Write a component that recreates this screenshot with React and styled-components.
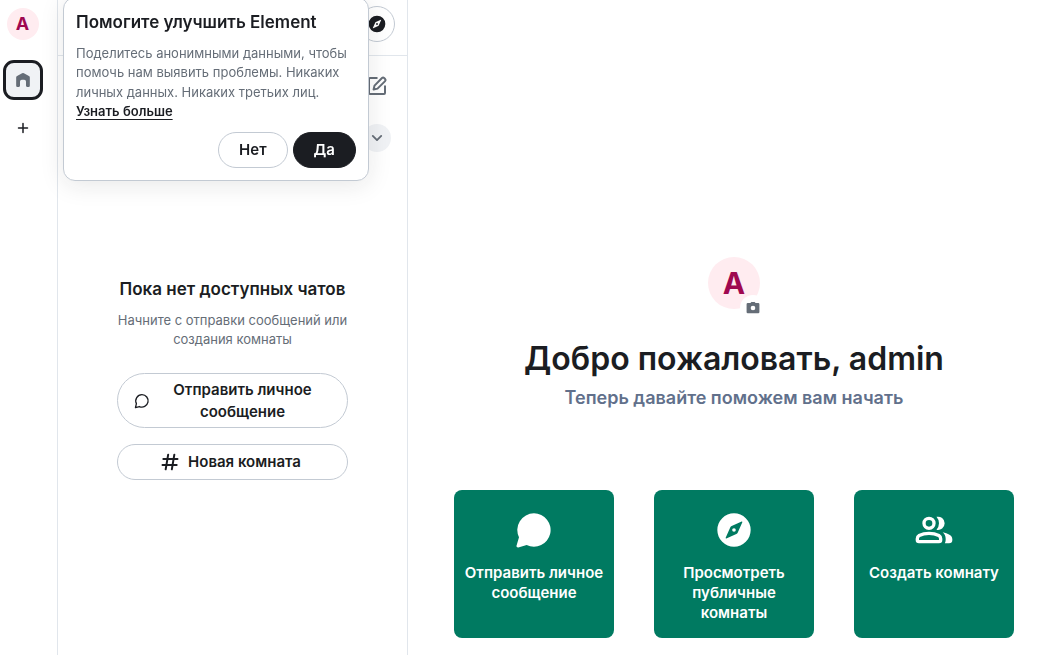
import React from 'react'
import styled, { createGlobalStyle } from 'styled-components'

const GlobalStyle = createGlobalStyle`
  * {
    box-sizing: border-box;
  }
  body {
    margin: 0;
    background: #fff;
    color: #1b1d22;
    font-family: Inter, "Liberation Sans", sans-serif;
    font-size: 15px;
    line-height: 1.5;
    -webkit-font-smoothing: antialiased;
  }
  h1, h2, h3, p {
    margin: 0;
  }
  button {
    font: inherit;
    color: inherit;
    cursor: pointer;
  }
`

/* icons */

const Icon = ({ size = 24, children, ...rest }) => (
  <svg width={size} height={size} viewBox="0 0 24 24" fill="currentColor" aria-hidden="true" {...rest}>
    {children}
  </svg>
)

const HomeIcon = (props) => (
  <Icon {...props}>
    <path d="M10.9 3.900a2 2 0 0 1 2.200 0l6 3.300A2 2 0 0 1 20.200 9V18.800a1.500 1.500 0 0 1-1.500 1.500H16.900a1.300 1.300 0 0 1-1.300-1.300V13.800a2.200 2.200 0 0 0-2.200-2.200h-2.800a2.200 2.200 0 0 0-2.200 2.200v5.200a1.300 1.300 0 0 1-1.300 1.300H5.300A1.500 1.500 0 0 1 3.800 18.800V9a2 2 0 0 1 1.100-1.800z" />
  </Icon>
)

const PlusIcon = (props) => (
  <Icon {...props}>
    <path d="M12 6v12M6 12h12" fill="none" stroke="currentColor" strokeWidth="2" strokeLinecap="round" />
  </Icon>
)

const ExploreIcon = (props) => (
  <Icon {...props}>
    <path
      fillRule="evenodd"
      d="M12 2a10 10 0 1 1 0 20 10 10 0 0 1 0-20zM16.600 6.900l-6 2.700a1.500 1.500 0 0 0-.8.8l-2.800 6.300c-.1.300.1.500.4.400l6-2.700a1.500 1.500 0 0 0 .8-.8l2.800-6.300c.1-.3-.1-.5-.4-.4z"
    />
    <circle cx="12" cy="12" r="1.100" />
  </Icon>
)

const ComposeIcon = (props) => (
  <Icon {...props}>
    <path
      d="M12.500 4H5a1 1 0 0 0-1 1v14a1 1 0 0 0 1 1h14a1 1 0 0 0 1-1v-7.500"
      fill="none"
      stroke="currentColor"
      strokeWidth="2"
    />
    <path
      d="M9.500 11.600 17 4a1.500 1.500 0 0 1 2.100 0l1 1a1.500 1.500 0 0 1 0 2.100L12.500 14.600 8.600 15.500z"
      fill="none"
      stroke="currentColor"
      strokeWidth="2"
      strokeLinejoin="round"
    />
  </Icon>
)

const ChevronDownIcon = (props) => (
  <Icon {...props}>
    <path
      d="m7.400 9.700 4.600 4.600 4.600-4.600"
      fill="none"
      stroke="currentColor"
      strokeWidth="2"
      strokeLinecap="round"
      strokeLinejoin="round"
    />
  </Icon>
)

const ChatIcon = (props) => (
  <Icon {...props}>
    <path
      d="M12 2.500a9.300 9.300 0 1 1-3.900 17.800L2.200 21.800l1.400-5.900A9.300 9.300 0 0 1 12 2.500z"
      fill="none"
      stroke="currentColor"
      strokeWidth="2"
      strokeLinejoin="round"
    />
  </Icon>
)

const ChatSolidIcon = (props) => (
  <Icon {...props}>
    <path d="M12 2a10 10 0 1 1-4.400 19l-5 1.500a.9.9 0 0 1-1.100-1.100l1.500-5A10 10 0 0 1 12 2z" />
  </Icon>
)

const RoomIcon = (props) => (
  <Icon {...props}>
    <path
      d="M9.800 3.200 6.800 20.800M17.200 3.200l-3 17.600M4 8.500h17M3 15.500h17"
      fill="none"
      stroke="currentColor"
      strokeWidth="2.4"
      strokeLinecap="round"
    />
  </Icon>
)

const GroupIcon = (props) => (
  <Icon {...props}>
    <circle cx="9" cy="8" r="3" fill="none" stroke="currentColor" strokeWidth="2" />
    <path
      d="M2 17.200c0-.8.400-1.500 1.100-1.900C4.900 14.400 6.900 14 9 14s4.100.4 5.900 1.300c.7.4 1.100 1.100 1.100 1.900V18a1 1 0 0 1-1 1H3a1 1 0 0 1-1-1z"
      fill="none"
      stroke="currentColor"
      strokeWidth="2"
    />
    <path d="M13.500 4.100a4 4 0 1 1 0 7.800A6 6 0 0 0 15 8a6 6 0 0 0-1.500-3.900z" />
    <path d="M17.200 13.400c3.100.6 5.800 1.900 5.800 4.100V18a2 2 0 0 1-2 2h-2.500c.3-.6.5-1.300.5-2v-.8c0-1.600-.7-2.900-1.800-3.800z" />
  </Icon>
)

const CameraIcon = (props) => (
  <Icon {...props}>
    <path
      fillRule="evenodd"
      d="M7.600 3.500 8.800 2A1.200 1.200 0 0 1 9.800 1.500h4.400a1.200 1.200 0 0 1 1 .5l1.200 1.500H21a2 2 0 0 1 2 2V19a2 2 0 0 1-2 2H3a2 2 0 0 1-2-2V5.500a2 2 0 0 1 2-2zM12 8a4 4 0 1 0 0 8 4 4 0 0 0 0-8z"
    />
  </Icon>
)

/* page */

export default function App() {
  return (
    <>
      <GlobalStyle />
      <Layout>
        <SpacePanel aria-label="Пространства">
          <Avatar $size={32}>A</Avatar>
          <HomeButton aria-label="Главная">
            <HomeIcon size={20} />
          </HomeButton>
          <AddButton aria-label="Создать пространство">
            <PlusIcon size={18} />
          </AddButton>
        </SpacePanel>

        <ChatPanel>
          <SearchBar>
            <OutlineRound aria-label="Обзор комнат">
              <ExploreIcon size={20} />
            </OutlineRound>
          </SearchBar>
          <Tools>
            <ToolButton aria-label="Новое сообщение">
              <ComposeIcon />
            </ToolButton>
            <ToolButton $filled aria-label="Развернуть фильтры">
              <ChevronDownIcon size={22} />
            </ToolButton>
          </Tools>
          <EmptyState>
            <Title>Пока нет доступных чатов</Title>
            <Description>Начните с отправки сообщений или создания комнаты</Description>
            <Actions>
              <PillButton $wide>
                <ChatIcon size={16} />
                <span>Отправить личное сообщение</span>
              </PillButton>
              <PillButton $wide>
                <RoomIcon size={20} />
                <span>Новая комната</span>
              </PillButton>
            </Actions>
          </EmptyState>
        </ChatPanel>

        <Welcome>
          <AvatarUpload aria-label="Загрузить аватар">
            <Avatar $size={52}>A</Avatar>
            <CameraBadge>
              <CameraIcon size={14} />
            </CameraBadge>
          </AvatarUpload>
          <Heading>Добро пожаловать, admin</Heading>
          <Subheading>Теперь давайте поможем вам начать</Subheading>
          <Cards>
            <Card>
              <ChatSolidIcon size={40} />
              Отправить личное сообщение
            </Card>
            <Card>
              <ExploreIcon size={40} />
              Просмотреть публичные комнаты
            </Card>
            <Card>
              <GroupIcon size={40} />
              Создать комнату
            </Card>
          </Cards>
        </Welcome>
      </Layout>

      <Toast role="alert">
        <Title>Помогите улучшить Element</Title>
        <Description>
          Поделитесь анонимными данными, чтобы помочь нам выявить проблемы. Никаких личных данных. Никаких третьих
          лиц. <MoreLink href="#more">Узнать больше</MoreLink>
        </Description>
        <ToastButtons>
          <PillButton>Нет</PillButton>
          <PillButton $primary>Да</PillButton>
        </ToastButtons>
      </Toast>
    </>
  )
}

const Layout = styled.div`
  display: flex;
  min-height: 100vh;
`

const SpacePanel = styled.nav`
  display: flex;
  flex-direction: column;
  align-items: center;
  flex: none;
  width: 58px;
  padding: 8px 12px 0 0;
  border-right: 1px solid #e1e6ec;
`

const Avatar = styled.span`
  display: flex;
  align-items: center;
  justify-content: center;
  width: ${(p) => p.$size}px;
  height: ${(p) => p.$size}px;
  border-radius: 50%;
  background: #ffecf0;
  color: #9f0850;
  font-size: ${(p) => (p.$size > 40 ? 30 : 18)}px;
  font-weight: 700;
  line-height: 1;
`

const HomeButton = styled.button`
  display: flex;
  align-items: center;
  justify-content: center;
  width: 40px;
  height: 40px;
  margin-top: 20px;
  padding: 0;
  border: 3px solid #1b1d22;
  border-radius: 11px;
  background: #f0f2f5;
  color: #656d77;
`

const AddButton = styled.button`
  display: flex;
  align-items: center;
  justify-content: center;
  width: 32px;
  height: 32px;
  margin-top: 12px;
  padding: 0;
  border: 0;
  background: none;
`

const ChatPanel = styled.section`
  flex: none;
  width: 350px;
  border-right: 1px solid #e1e6ec;
`

const SearchBar = styled.div`
  display: flex;
  justify-content: flex-end;
  height: 56px;
  padding: 6px 12px;
  border-bottom: 1px solid #e1e6ec;
`

const OutlineRound = styled.button`
  display: flex;
  align-items: center;
  justify-content: center;
  width: 36px;
  height: 36px;
  padding: 0;
  border: 1px solid #c3cad3;
  border-radius: 50%;
  background: #fff;
`

const Tools = styled.div`
  display: flex;
  flex-direction: column;
  align-items: flex-end;
  gap: 24px;
  padding: 16px;
`

const ToolButton = styled.button`
  display: flex;
  align-items: center;
  justify-content: center;
  width: 28px;
  height: 28px;
  padding: 0;
  border: 0;
  border-radius: 50%;
  background: ${(p) => (p.$filled ? '#f0f2f5' : 'none')};
  color: #656d77;
`

const EmptyState = styled.div`
  display: flex;
  flex-direction: column;
  gap: 8px;
  width: 231px;
  margin: 109px auto 0;
  text-align: center;
`

const Title = styled.h2`
  font-size: 17px;
  font-weight: 600;
`

const Description = styled.p`
  color: #656d77;
  font-size: 13px;
`

const Actions = styled.div`
  display: flex;
  flex-direction: column;
  gap: 16px;
  margin-top: 15px;
`

const PillButton = styled.button`
  display: flex;
  align-items: center;
  justify-content: center;
  gap: 8px;
  min-height: 36px;
  padding: ${(p) => (p.$wide ? '5px 20px 4px 16px' : '4px 20px')};
  border: 1px solid ${(p) => (p.$primary ? '#1b1d22' : '#c3cad3')};
  border-radius: 28px;
  background: ${(p) => (p.$primary ? '#1b1d22' : '#fff')};
  color: ${(p) => (p.$primary ? '#fff' : '#1b1d22')};
  font-weight: 600;
  line-height: 22px;
  svg {
    flex: none;
  }
`

const Welcome = styled.main`
  display: flex;
  flex-direction: column;
  align-items: center;
  flex: 1;
  min-width: 0;
  padding: 257px 0 16px 15px;
  text-align: center;
`

const AvatarUpload = styled.button`
  position: relative;
  padding: 0;
  border: 0;
  background: none;
`

const CameraBadge = styled.span`
  position: absolute;
  right: -6px;
  bottom: -12px;
  display: flex;
  align-items: center;
  justify-content: center;
  width: 26px;
  height: 26px;
  border-radius: 50%;
  background: #fff;
  color: #656d77;
`

const Heading = styled.h1`
  margin-top: 28px;
  font-size: 32px;
  font-weight: 600;
  line-height: 44px;
`

const Subheading = styled.h2`
  margin-top: 5px;
  color: #61708b;
  font-size: 18px;
  font-weight: 600;
  line-height: 24px;
`

const Cards = styled.div`
  display: flex;
  gap: 40px;
  margin-top: 80px;
`

const Card = styled.button`
  display: flex;
  flex-direction: column;
  align-items: center;
  gap: 13px;
  width: 160px;
  padding: 20px 10px 15px;
  border: 0;
  border-radius: 8px;
  background: #007a61;
  color: #fff;
  font-weight: 600;
  line-height: 20px;
`

/* hangs from the top edge of the window */
const Toast = styled.div`
  position: fixed;
  top: -3px;
  left: 63px;
  width: 306px;
  padding: 12px;
  border: 1px solid #c3cad3;
  border-radius: 12px;
  background: #fff;
  box-shadow: 0 4px 24px rgba(27, 29, 34, 0.1);
  ${Description} {
    margin-top: 8px;
  }
`

const MoreLink = styled.a`
  color: #1b1d22;
  font-weight: 600;
  text-decoration: underline;
  text-underline-offset: 3px;
`

const ToastButtons = styled.div`
  display: flex;
  justify-content: flex-end;
  gap: 5px;
  margin-top: 10px;
`
